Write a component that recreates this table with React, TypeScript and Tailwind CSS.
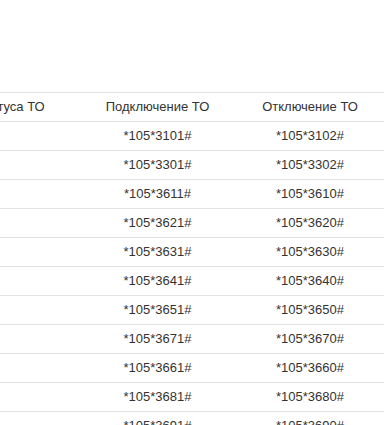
const rows = [
  ["*105*3101#", "*105*3102#"],
  ["*105*3301#", "*105*3302#"],
  ["*105*3611#", "*105*3610#"],
  ["*105*3621#", "*105*3620#"],
  ["*105*3631#", "*105*3630#"],
  ["*105*3641#", "*105*3640#"],
  ["*105*3651#", "*105*3650#"],
  ["*105*3671#", "*105*3670#"],
  ["*105*3661#", "*105*3660#"],
  ["*105*3681#", "*105*3680#"],
  ["*105*3691#", "*105*3690#"],
]

export default function App() {
  return (
    <div className="h-[425px] w-[384px] overflow-hidden bg-white font-['Liberation_Sans',Arial,sans-serif] text-[13px] text-[#333]">
      <div className="ml-[-120px] mt-[92px] w-[660px] border-t border-[#e2e2e2]">
        <div className="grid h-[29px] grid-cols-[201px_153px_152px_154px] items-center border-b border-[#e2e2e2]">
          <div className="text-center">Проверка статуса ТО</div>
          <div className="text-center">Подключение ТО</div>
          <div className="text-center">Отключение ТО</div>
          <div />
        </div>
        {rows.map(([on, off]) => (
          <div
            key={on}
            className="grid h-[29px] grid-cols-[201px_153px_152px_154px] items-center border-b border-[#e2e2e2]"
          >
            <div />
            <div className="text-center">{on}</div>
            <div className="text-center">{off}</div>
            <div />
          </div>
        ))}
      </div>
    </div>
  )
}
